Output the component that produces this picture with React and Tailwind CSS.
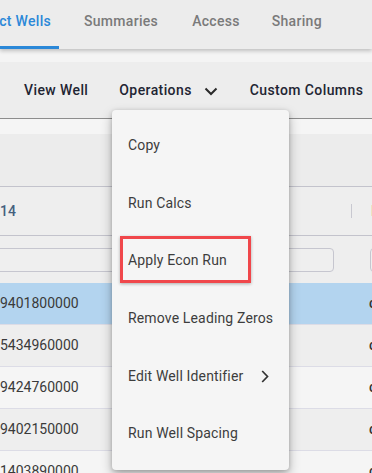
import React from "react";

const rows = [
  { id: "9401800000", bg: "bg-[#b3d4ef]" },
  { id: "5434960000", bg: "bg-[#eeeeee]" },
  { id: "9424760000", bg: "bg-[#f5f5f5]" },
  { id: "9402150000", bg: "bg-[#eeeeee]" },
  { id: "1403890000", bg: "bg-[#f5f5f5]" },
];

const items = [
  "Copy",
  "Run Calcs",
  "Apply Econ Run",
  "Remove Leading Zeros",
  "Edit Well Identifier",
  "Run Well Spacing",
];

function ChevronDown() {
  return (
    <svg width="14" height="9" viewBox="0 0 14 9" fill="none">
      <path d="M1.5 1.5 L7 7 L12.5 1.5" stroke="#2a2a2a" strokeWidth="2" />
    </svg>
  );
}

function ChevronRight() {
  return (
    <svg width="8" height="13" viewBox="0 0 8 13" fill="none">
      <path d="M1.2 1 L6.5 6.5 L1.2 12" stroke="#333" strokeWidth="1.7" />
    </svg>
  );
}

export default function App() {
  return (
    <div className="relative w-[372px] h-[473px] overflow-hidden bg-[#eeeeee] font-['Roboto',sans-serif] text-[14px]">
      {/* Tabs */}
      <div className="relative z-10 flex h-[49px] bg-[#ececec] shadow-[0_2px_4px_rgba(0,0,0,0.22)]">
        <div className="relative flex w-[59px] shrink-0 justify-end overflow-hidden pr-[8px] pt-[11px]">
          <span className="whitespace-nowrap font-medium tracking-[0.3px] text-[#2b88d8]">Select Wells</span>
          <div className="absolute bottom-0 left-0 h-[3px] w-[59px] bg-[#2b88d8]" />
        </div>
        <div className="flex pl-[25px] pt-[11px] font-medium tracking-[0.3px] text-[#7a7a7a]">
          <span>Summaries</span>
          <span className="ml-[34px]">Access</span>
          <span className="ml-[32px]">Sharing</span>
        </div>
      </div>
      <div className="h-[13px] bg-[#f4f4f4]" />
      {/* Toolbar */}
      <div className="flex h-[57px] items-center border-b border-[#8d8d8d] bg-[#ededed] pl-[24px] font-medium tracking-[0.4px] text-[#1f2533]">
        <span>View Well</span>
        <span className="ml-[31px]">Operations</span>
        <span className="ml-[12px] mt-[2px]">
          <ChevronDown />
        </span>
        <span className="ml-[32px] whitespace-nowrap">Custom Columns</span>
      </div>
      <div className="h-[15px] bg-[#f5f5f5]" />
      <div className="h-[53px] border-b border-[#c3c3cc] bg-[#ececec]" />
      {/* Header row */}
      <div className="flex h-[49px] items-center border-b border-[#c3c3cc] bg-[#eeeeee]">
        <span className="w-[351px] shrink-0 font-medium text-[#45607e]">14</span>
        <span className="h-[14px] w-px shrink-0 bg-[#c8c8d0]" />
        <span className="ml-[19px] font-medium text-[#8a4a3a]">I</span>
      </div>
      {/* Filter row */}
      <div className="flex h-[47px] items-center bg-[#eeeeee]">
        <div className="ml-[-10px] h-[24px] w-[344px] shrink-0 rounded-[4px] border border-[#c6c6cf] bg-[#efefef]" />
        <div className="ml-[36px] h-[24px] w-[40px] shrink-0 rounded-[4px] border border-[#c6c6cf] bg-[#efefef]" />
      </div>
      {/* Data rows */}
      {rows.map((r) => (
        <div
          key={r.id}
          className={`flex h-[42px] items-center border-b border-[#dcdce6] ${r.bg} text-[#3a3a3a]`}
        >
          <span className="w-[369px] shrink-0">{r.id}</span>
          <span className="font-medium text-[#333]">c</span>
        </div>
      ))}

      {/* Operations menu */}
      <div className="absolute left-[112px] top-[110px] w-[177px] rounded-[4px] bg-[#f5f5f5] py-[7px] shadow-[0_5px_12px_rgba(0,0,0,0.28),0_1px_4px_rgba(0,0,0,0.18)]">
        {items.map((it) => (
          <div
            key={it}
            className="flex h-[57.6px] items-center pl-[16px] tracking-[0.15px] text-[#3d3d3d]"
          >
            <span className="whitespace-nowrap">{it}</span>
            {it === "Edit Well Identifier" && (
              <span className="ml-[18px] mt-[1px] flex">
                <ChevronRight />
              </span>
            )}
          </div>
        ))}
      </div>

      {/* Highlight annotation */}
      <div className="absolute left-[120px] top-[236px] h-[47px] w-[131px] border-[3px] border-[#f0474b] shadow-[0_1px_3px_rgba(0,0,0,0.3)]" />
    </div>
  );
}
